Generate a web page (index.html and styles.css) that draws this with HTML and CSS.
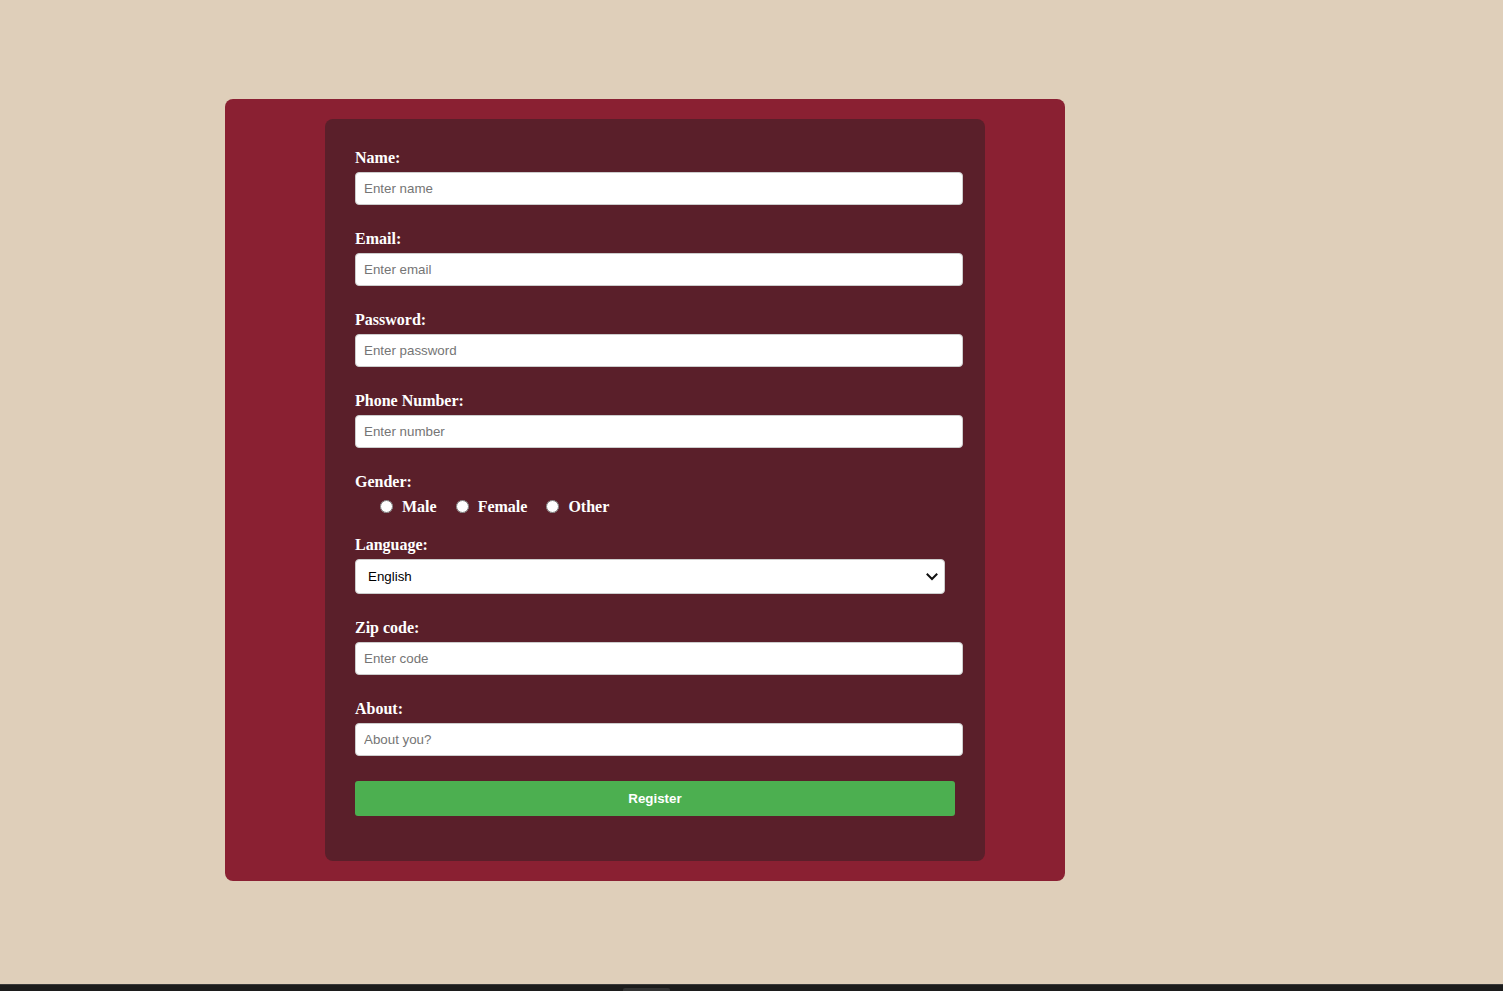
FILE: index.html
```html
<!DOCTYPE html>
<html lang="en">
<head>
<meta charset="utf-8">
<title>Register</title>
<link rel="stylesheet" href="styles.css">
</head>
<body>
<div class="outer">
  <form class="card">
    <div class="group">
      <label class="lbl" for="name">Name:</label>
      <input class="field" id="name" type="text" placeholder="Enter name">
    </div>
    <div class="group">
      <label class="lbl" for="email">Email:</label>
      <input class="field" id="email" type="email" placeholder="Enter email">
    </div>
    <div class="group">
      <label class="lbl" for="pw">Password:</label>
      <input class="field" id="pw" type="password" placeholder="Enter password">
    </div>
    <div class="group">
      <label class="lbl" for="phone">Phone Number:</label>
      <input class="field" id="phone" type="text" placeholder="Enter number">
    </div>
    <div class="gender">
      <span class="lbl">Gender:</span>
      <div class="radios">
        <label class="opt"><input type="radio" name="g" class="radio"><span>Male</span></label>
        <label class="opt"><input type="radio" name="g" class="radio"><span>Female</span></label>
        <label class="opt"><input type="radio" name="g" class="radio"><span>Other</span></label>
      </div>
    </div>
    <div class="group">
      <label class="lbl" for="lang">Language:</label>
      <div class="select-wrap">
        <select class="select" id="lang">
          <option>English</option>
          <option>Spanish</option>
          <option>French</option>
        </select>
        <svg class="chev" width="12" height="8" viewBox="0 0 12 8" aria-hidden="true">
          <path d="M1.5 1.5 L6 6 L10.5 1.5" fill="none" stroke="#111" stroke-width="2" stroke-linecap="square"/>
        </svg>
      </div>
    </div>
    <div class="group">
      <label class="lbl" for="zip">Zip code:</label>
      <input class="field" id="zip" type="text" placeholder="Enter code">
    </div>
    <div class="group">
      <label class="lbl" for="about">About:</label>
      <input class="field" id="about" type="text" placeholder="About you?">
    </div>
    <button class="btn" type="button">Register</button>
  </form>
</div>
<div class="taskbar"><span class="tab"></span></div>
</body>
</html>
```
FILE: styles.css
```css
html, body {
  margin: 0;
  padding: 0;
}
body {
  background: #dfcfba;
  min-height: 991px;
  font-family: "Liberation Serif", "Times New Roman", serif;
}
.outer {
  box-sizing: border-box;
  width: 840px;
  margin: 99px 0 0 225px;
  padding: 20px 100px;
  background: #8a2032;
  border-radius: 8px;
}
.card {
  box-sizing: border-box;
  width: 660px;
  margin: 0;
  padding: 30px 30px 30px;
  background: #5a1f2a;
  border-radius: 8px;
  display: flex;
  flex-direction: column;
}
.group {
  display: flex;
  flex-direction: column;
  align-items: flex-start;
  margin-bottom: 25px;
}
.lbl {
  display: block;
  color: #ffffff;
  font-weight: bold;
  font-size: 16px;
  line-height: 18px;
  height: 18px;
  margin-bottom: 5px;
}
.field {
  box-sizing: border-box;
  width: 608px;
  height: 33px;
  padding: 0 8px;
  border: 1px solid #cccccc;
  border-radius: 4px;
  background: #ffffff;
  font-family: "Liberation Sans", Arial, sans-serif;
  font-size: 13.33px;
  color: #000;
  outline: none;
}
.field::placeholder {
  color: #757575;
}
.gender {
  display: flex;
  flex-direction: column;
  margin-bottom: 19px;
}
.gender .lbl {
  margin-bottom: 0;
}
.radios {
  display: flex;
  align-items: center;
  gap: 19px;
  height: 20px;
  margin-top: 6px;
  padding-left: 25px;
}
.opt {
  display: flex;
  align-items: center;
  gap: 9px;
  color: #ffffff;
  font-weight: bold;
  font-size: 16px;
  line-height: 20px;
}
.radio {
  width: 13px;
  height: 13px;
  margin: 0 0 1px;
}
.select-wrap {
  position: relative;
  width: 590px;
  height: 35px;
}
.select {
  box-sizing: border-box;
  width: 590px;
  height: 35px;
  padding: 0 12px;
  border: 1px solid #cccccc;
  border-radius: 4px;
  background: #ffffff;
  font-family: "Liberation Sans", Arial, sans-serif;
  font-size: 13.33px;
  color: #000;
  -webkit-appearance: none;
  appearance: none;
}
.chev {
  position: absolute;
  right: 7px;
  top: 14px;
  pointer-events: none;
}
.btn {
  box-sizing: border-box;
  width: 600px;
  height: 35px;
  margin: 0 0 15px;
  border: none;
  border-radius: 3px;
  background: #4caf50;
  color: #ffffff;
  font-family: "Liberation Sans", Arial, sans-serif;
  font-weight: bold;
  font-size: 13.33px;
  cursor: pointer;
}
.taskbar {
  position: fixed;
  left: 0;
  right: 0;
  bottom: 0;
  height: 6px;
  background: #1c1c1c;
  border-top: 1px solid #3a3a3a;
}
.tab {
  position: absolute;
  left: 623px;
  top: 3px;
  width: 47px;
  height: 3px;
  background: #333333;
  border-radius: 2px 2px 0 0;
}
```
